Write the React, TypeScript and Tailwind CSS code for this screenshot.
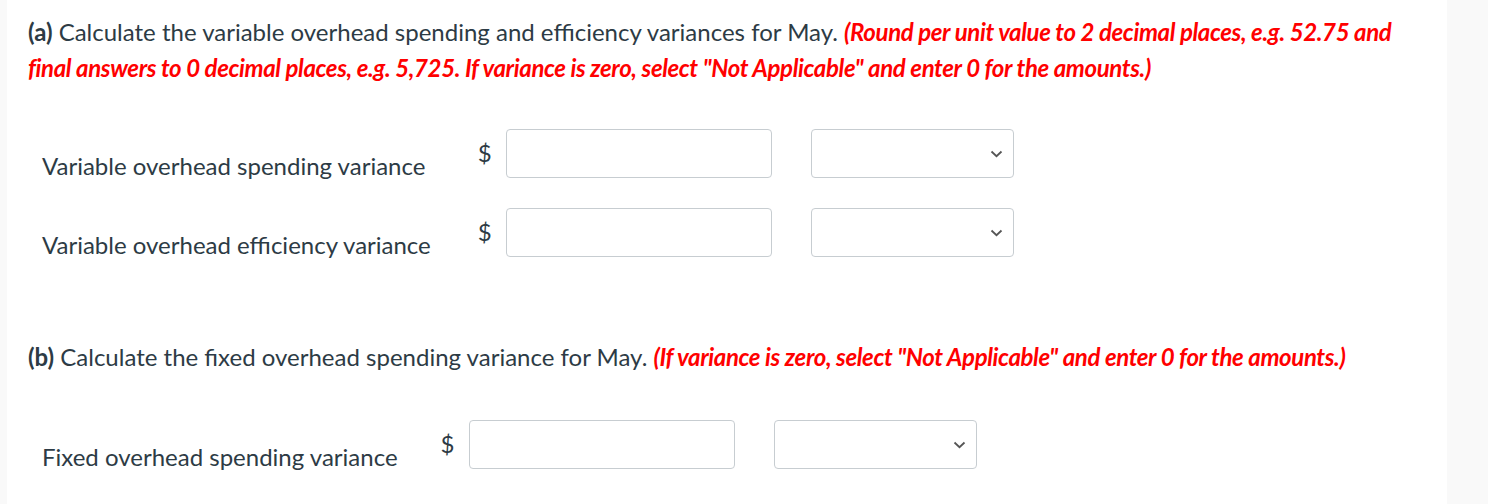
import React from 'react';

const ink = 'text-[#2d3b45]';

function Chevron() {
  return (
    <svg width="13" height="8" viewBox="0 0 13 8" className="shrink-0">
      <path d="M1.5 1.5 L6.5 6.2 L11.5 1.5" fill="none" stroke="#555" strokeWidth="1.8" />
    </svg>
  );
}

function AnswerRow({ label, dollarGap = 'ml-[47px]' }: { label: string; dollarGap?: string }) {
  return (
    <>
      <div className={`pt-[22px] text-[24px] leading-[30px] whitespace-nowrap ${ink}`}>{label}</div>
      <div className="flex items-start">
        <div className={`${dollarGap} pt-[11px] text-[24px] leading-[26px] ${ink}`}>$</div>
        <input
          type="text"
          className="ml-[14px] w-[266px] h-[49px] rounded-[4px] border border-[#c7cdd1] bg-white outline-none"
        />
        <div className="ml-[39px] w-[203px] h-[49px] rounded-[4px] border border-[#c7cdd1] bg-white flex items-center justify-end pr-[10px]">
          <Chevron />
        </div>
      </div>
    </>
  );
}

export default function App() {
  return (
    <div className="w-[1488px] h-[504px] flex bg-[#f9f9f9] overflow-hidden" style={{ fontFamily: 'Lato, "Open Sans", sans-serif' }}>
      <div className="w-[7px] shrink-0" />
      <div className="w-[1440px] shrink-0 bg-white pl-[21px] pt-[14px]">
        <p className={`w-[1400px] text-[24px] leading-[36px] ${ink}`}>
          <strong>(a)</strong> Calculate the variable overhead spending and efficiency variances for May.{' '}
          <span className="font-bold italic tracking-[-0.37px] text-[#ff0000]">
            (Round per unit value to 2 decimal places, e.g. 52.75 and final answers to 0 decimal places, e.g. 5,725. If variance is zero, select "Not Applicable" and enter 0 for the amounts.)
          </span>
        </p>

        <div className="mt-[43px] pl-[14px] grid grid-cols-[auto_auto] justify-start gap-y-[27px]">
          <AnswerRow label="Variable overhead spending variance" />
          <AnswerRow label="Variable overhead efficiency variance" />
        </div>

        <p className={`mt-[79px] text-[24px] leading-[36px] ${ink}`}>
          <strong>(b)</strong> Calculate the fixed overhead spending variance for May.{' '}
          <span className="font-bold italic tracking-[-0.37px] text-[#ff0000]">
            (If variance is zero, select "Not Applicable" and enter 0 for the amounts.)
          </span>
        </p>

        <div className="mt-[45px] pl-[14px] grid grid-cols-[auto_auto] justify-start">
          <AnswerRow label="Fixed overhead spending variance" dollarGap="ml-[43px]" />
        </div>
      </div>
    </div>
  );
}
